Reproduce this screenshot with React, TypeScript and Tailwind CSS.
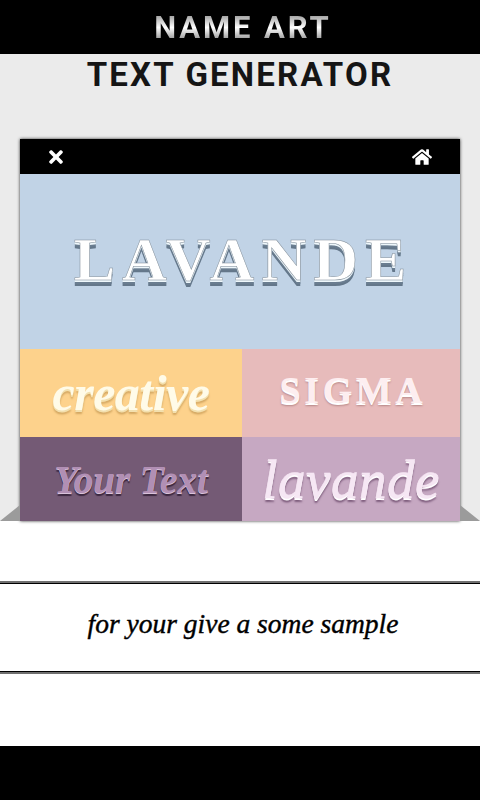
import React from "react";
import { FaHome, FaTimes } from "react-icons/fa";

function Tile({ className, children }: { className: string; children: React.ReactNode }) {
  return <div className={"flex items-center justify-center overflow-hidden " + className}>{children}</div>;
}

export default function App() {
  return (
    <div className="flex h-[800px] w-[480px] flex-col overflow-hidden bg-white font-['Roboto',sans-serif]">
      {/* Header */}
      <header className="flex h-[54px] items-center justify-center bg-black pl-[6px]">
        <h1 className="bg-gradient-to-b from-[#8a8a8a] via-white to-[#7d7d7d] bg-clip-text text-[31px] font-bold leading-none tracking-[2.9px] text-transparent">
          NAME ART
        </h1>
      </header>

      {/* Stage */}
      <section className="relative flex h-[467px] flex-col items-center bg-[#ebebeb]">
        <h2 className="mt-[3px] h-[82px] text-[33px] font-bold leading-[36px] tracking-[2.2px] text-[#151515]">
          TEXT GENERATOR
        </h2>

        <svg className="absolute bottom-0 left-0" width="20" height="16" viewBox="0 0 20 16">
          <polygon points="0,16 20,0 20,16" fill="#9b9b9b" />
        </svg>
        <svg className="absolute bottom-0 right-0" width="20" height="16" viewBox="0 0 20 16">
          <polygon points="0,0 20,16 0,16" fill="#9b9b9b" />
        </svg>

        <div className="flex h-[382px] w-[440px] flex-col shadow-[0_0_3px_rgba(0,0,0,0.8)]">
          <div className="flex h-[35px] items-center justify-between bg-black pl-[26px] pr-[28px]">
            <FaTimes size={20} className="text-white" />
            <FaHome size={20} className="text-white" />
          </div>

          <Tile className="h-[175px] bg-[#c1d3e6] pb-[6px] pl-[7px]">
            <span className="font-['Liberation_Serif',serif] text-[62px] font-bold leading-none tracking-[7px] text-white [-webkit-text-stroke:0.5px_#7d8a96] [text-shadow:0_2px_0_#eef7fb,0_4px_0_#6a7d90,0_6px_0_#64778a]">
              LAVANDE
            </span>
          </Tile>

          <div className="grid h-[88px] grid-cols-[222px_218px]">
            <Tile className="bg-[#fdd28c]">
              <span className="font-['Liberation_Serif',serif] text-[50px] font-bold italic leading-none tracking-[-0.5px] text-[#fffbe8] [text-shadow:0_2px_0_#f3e0ae,0_4px_2px_#d3a762]">
                creative
              </span>
            </Tile>
            <Tile className="bg-[#e7bbbb] pb-[7px] pl-[4px]">
              <span className="font-['Liberation_Serif',serif] text-[38px] font-bold leading-none tracking-[3.6px] text-[#fdeef0] [text-shadow:0_2px_0_#fff,0_3px_2px_#b58686]">
                SIGMA
              </span>
            </Tile>
          </div>

          <div className="grid h-[84px] grid-cols-[222px_218px]">
            <Tile className="bg-[#745a75]">
              <span className="font-['Liberation_Serif',serif] text-[39px] font-bold italic leading-none text-[#b18fb4] [text-shadow:0_1px_0_#d9c2da,0_3px_1px_#3c2840]">
                Your Text
              </span>
            </Tile>
            <Tile className="bg-[#c6a8c2]">
              <span className="font-['Liberation_Serif',serif] text-[55px] italic leading-none tracking-[0.5px] text-[#f6e7f4] [-webkit-text-stroke:0.6px_#f6e7f4] [text-shadow:0_2px_0_#fff,0_4px_2px_#7d5c7c]">
                lavande
              </span>
            </Tile>
          </div>
        </div>
      </section>

      {/* Sample band */}
      <div className="h-[60px] shrink-0" />
      <div className="flex h-[93px] shrink-0 items-center justify-center border-y-2 border-[#707070] pb-[8px] pl-[6px] shadow-[inset_0_1px_0_#000,inset_0_-1px_0_#000]">
        <p className="font-['Liberation_Serif',serif] text-[27.5px] italic leading-none text-black [-webkit-text-stroke:0.4px_#000]">
          for your give a some sample
        </p>
      </div>
      <div className="h-[72px] shrink-0" />
      <footer className="flex-1 bg-black" />
    </div>
  );
}
